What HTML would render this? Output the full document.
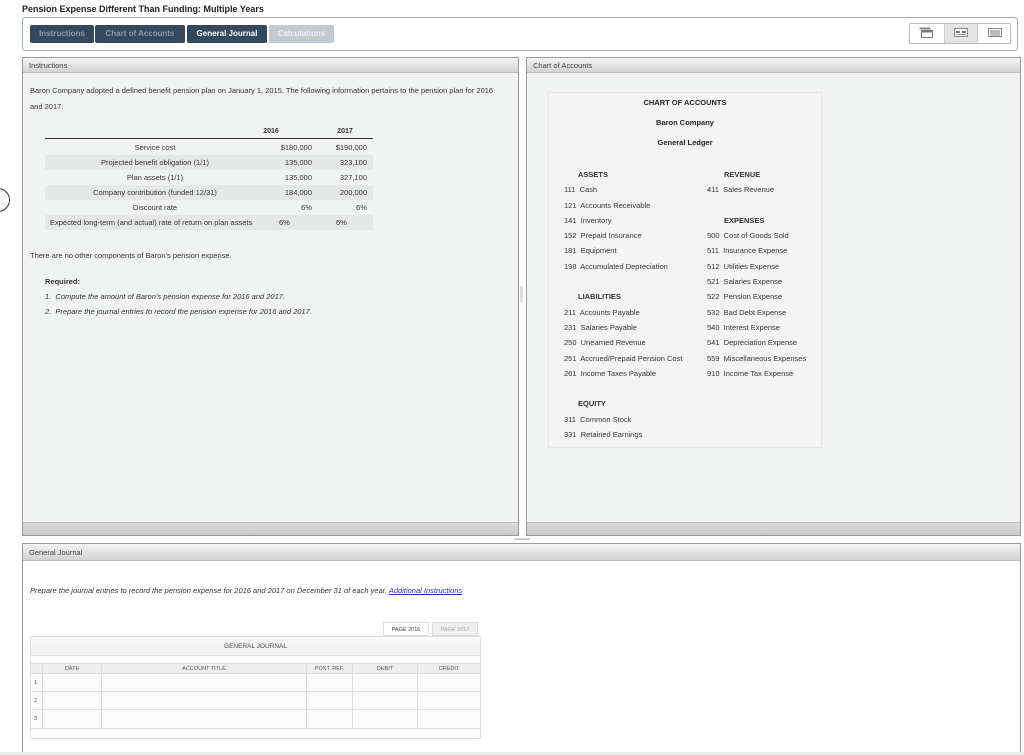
<!DOCTYPE html>
<html><head><meta charset="utf-8"><style>
*{margin:0;padding:0;box-sizing:border-box}
html,body{width:1024px;height:755px;overflow:hidden}
body{background:#fff;position:relative;font-family:"Liberation Sans",Arial,sans-serif;color:#333;font-size:7.5px}
.a{position:absolute;white-space:nowrap}
.panel{position:absolute;border:1px solid #9a9a9a;background:#f1f3f2}
.hdr{position:absolute;left:0;right:0;top:0;height:15px;background:linear-gradient(#f4f4f4,#d3d3d3);border-bottom:1px solid #bbb;font-size:7.5px;padding:3px 0 0 6px;color:#444}
.foot{position:absolute;left:0;right:0;bottom:0;height:13px;background:linear-gradient(#dcdcdc,#c8c8c8);border-top:1px solid #bbb}
.tab{position:absolute;top:25px;height:18px;font-size:8px;font-weight:bold;padding-top:4px;text-align:center;border-radius:2px}
.b{font-weight:bold}
.r{text-align:right}
.row{position:absolute;left:45px;width:328px;height:15px}
.row.g{background:#e6e8e7}
table{border-collapse:collapse}
</style></head><body>
<div class="a b" style="left:22px;top:4px;font-size:9px;color:#222">Pension Expense Different Than Funding: Multiple Years</div>
<div class="a" style="left:22px;top:17px;width:996px;height:34px;border:1px solid #aaa;border-radius:3px"></div>
<div class="tab" style="left:30px;width:64px;background:#34495e;color:#8b9aab">Instructions</div>
<div class="tab" style="left:95px;width:90px;background:#34495e;color:#8b9aab">Chart of Accounts</div>
<div class="tab" style="left:187px;width:80px;background:#34495e;color:#fff">General Journal</div>
<div class="tab" style="left:269px;width:65px;background:#c4c9ce;color:#eef">Calculations</div>
<div class="a" style="left:909px;top:23px;width:102px;height:21px;border:1px solid #bbb;border-radius:2px;background:#fff"></div>
<div class="a" style="left:944px;top:24px;width:34px;height:19px;background:#e4e4e4;border-left:1px solid #ccc;border-right:1px solid #ccc"></div>
<svg class="a" style="left:919px;top:27px" width="16" height="12"><rect x="0.5" y="0.5" width="11" height="2" fill="#888"/><rect x="2.5" y="3.5" width="11" height="7" fill="#fff" stroke="#777"/><rect x="2.5" y="3.5" width="11" height="2" fill="#777"/></svg>
<svg class="a" style="left:954px;top:28px" width="15" height="10"><rect x="0.5" y="0.5" width="13" height="8" fill="#fff" stroke="#888"/><rect x="2" y="3" width="4" height="2" fill="#777"/><rect x="8" y="3" width="4" height="2" fill="#777"/><rect x="2" y="6" width="10" height="1" fill="#999"/></svg>
<svg class="a" style="left:988px;top:28px" width="15" height="10"><rect x="0.5" y="0.5" width="13" height="8" fill="#fff" stroke="#888"/><rect x="2" y="2.5" width="10" height="1" fill="#777"/><rect x="2" y="4.5" width="10" height="1" fill="#777"/><rect x="2" y="6.5" width="10" height="1" fill="#777"/></svg>
<div class="a" style="left:-14px;top:188px;width:24px;height:24px;border:1px solid #333;border-radius:50%;background:#fff"></div>

<div class="panel" style="left:22px;top:57px;width:497px;height:479px">
<div class="hdr">Instructions</div><div class="foot"></div></div>
<div class="a" style="left:30px;top:86px">Baron Company adopted a defined benefit pension plan on January 1, 2015. The following information pertains to the pension plan for 2016</div>
<div class="a" style="left:30px;top:102px">and 2017:</div>
<div class="a b" style="left:255px;top:128px;width:32px;text-align:center;font-size:7px">2016</div>
<div class="a b" style="left:329px;top:128px;width:32px;text-align:center;font-size:7px">2017</div>
<div class="a" style="left:45px;top:138px;width:328px;border-top:1px solid #333"></div>
<div class="row" style="top:140px"></div>
<div class="row g" style="top:155px"></div>
<div class="row" style="top:170px"></div>
<div class="row g" style="top:185px"></div>
<div class="row" style="top:200px"></div>
<div class="row g" style="top:215px"></div>
<div class="a" style="left:45px;top:143px;width:220px;text-align:center">Service cost</div>
<div class="a" style="left:45px;top:158px;width:220px;text-align:center">Projected benefit obligation (1/1)</div>
<div class="a" style="left:45px;top:173px;width:220px;text-align:center">Plan assets (1/1)</div>
<div class="a" style="left:45px;top:188px;width:220px;text-align:center">Company contribution (funded 12/31)</div>
<div class="a" style="left:45px;top:203px;width:220px;text-align:center">Discount rate</div>
<div class="a" style="left:50px;top:218px">Expected long-term (and actual) rate of return on plan assets</div>
<div class="a r" style="left:250px;top:143px;width:62px">$180,000</div>
<div class="a r" style="left:305px;top:143px;width:62px">$190,000</div>
<div class="a r" style="left:250px;top:158px;width:62px">135,000</div>
<div class="a r" style="left:305px;top:158px;width:62px">323,100</div>
<div class="a r" style="left:250px;top:173px;width:62px">135,000</div>
<div class="a r" style="left:305px;top:173px;width:62px">327,100</div>
<div class="a r" style="left:250px;top:188px;width:62px">184,000</div>
<div class="a r" style="left:305px;top:188px;width:62px">200,000</div>
<div class="a r" style="left:250px;top:203px;width:62px">6%</div>
<div class="a r" style="left:305px;top:203px;width:62px">6%</div>
<div class="a" style="left:279px;top:218px">6%</div>
<div class="a" style="left:336px;top:218px">6%</div>
<div class="a" style="left:30px;top:251px">There are no other components of Baron’s pension expense.</div>
<div class="a b" style="left:45px;top:277px">Required:</div>
<div class="a" style="left:45px;top:292px;font-style:italic">1.&nbsp; Compute the amount of Baron’s pension expense for 2016 and 2017.</div>
<div class="a" style="left:45px;top:307px;font-style:italic">2.&nbsp; Prepare the journal entries to record the pension expense for 2016 and 2017.</div>
<div class="a" style="left:520px;top:286px;width:3px;height:16px;background:#ddd"></div>

<div class="panel" style="left:526px;top:57px;width:495px;height:479px">
<div class="hdr">Chart of Accounts</div><div class="foot"></div></div>
<div class="a" style="left:548px;top:92px;width:274px;height:356px;background:#f3f4f3;border:1px solid #e6e8e7"></div>
<div class="a b" style="left:548px;top:98px;width:274px;text-align:center;color:#222">CHART OF ACCOUNTS</div>
<div class="a b" style="left:548px;top:118px;width:274px;text-align:center;color:#222">Baron Company</div>
<div class="a b" style="left:548px;top:138px;width:274px;text-align:center;color:#222">General Ledger</div>
<div class="a" style="left:564px;top:167px;line-height:15.3px">
<div class="b" style="padding-left:14px">ASSETS</div>
<div>111&nbsp; Cash</div><div>121&nbsp; Accounts Receivable</div><div>141&nbsp; Inventory</div><div>152&nbsp; Prepaid Insurance</div><div>181&nbsp; Equipment</div><div>198&nbsp; Accumulated Depreciation</div><div>&nbsp;</div>
<div class="b" style="padding-left:14px">LIABILITIES</div>
<div>211&nbsp; Accounts Payable</div><div>231&nbsp; Salaries Payable</div><div>250&nbsp; Unearned Revenue</div><div>251&nbsp; Accrued/Prepaid Pension Cost</div><div>261&nbsp; Income Taxes Payable</div><div>&nbsp;</div>
<div class="b" style="padding-left:14px">EQUITY</div>
<div>311&nbsp; Common Stock</div><div>331&nbsp; Retained Earnings</div></div>
<div class="a" style="left:707px;top:167px;line-height:15.3px">
<div class="b" style="padding-left:17px">REVENUE</div>
<div>411&nbsp; Sales Revenue</div><div>&nbsp;</div>
<div class="b" style="padding-left:17px">EXPENSES</div>
<div>500&nbsp; Cost of Goods Sold</div><div>511&nbsp; Insurance Expense</div><div>512&nbsp; Utilities Expense</div><div>521&nbsp; Salaries Expense</div><div>522&nbsp; Pension Expense</div><div>532&nbsp; Bad Debt Expense</div><div>540&nbsp; Interest Expense</div><div>541&nbsp; Depreciation Expense</div><div>559&nbsp; Miscellaneous Expenses</div><div>910&nbsp; Income Tax Expense</div></div>
<div class="a" style="left:514px;top:538px;width:16px;height:2px;border-top:1px solid #ccc;border-bottom:1px solid #ccc"></div>

<div class="panel" style="left:22px;top:543px;width:999px;height:220px;background:#fff">
<div class="hdr" style="height:17px;padding-top:4px">General Journal</div></div>
<div class="a" style="left:30px;top:586px;font-style:italic">Prepare the journal entries to record the pension expense for 2016 and 2017 on December 31 of each year. <span style="color:#2233cc;text-decoration:underline">Additional Instructions</span></div>
<div class="a" style="left:383px;top:622px;width:46px;height:14px;border:1px solid #ddd;background:#fff;font-size:5.5px;text-align:center;padding-top:4px;color:#444">PAGE 2016</div>
<div class="a" style="left:432px;top:622px;width:46px;height:14px;border:1px solid #ddd;background:#eee;font-size:5.5px;text-align:center;padding-top:4px;color:#aaa">PAGE 2017</div>
<div class="a" style="left:30px;top:636px;width:451px;height:103px;border:1px solid #ddd;border-radius:2px;background:#fff"></div>
<div class="a" style="left:31px;top:637px;width:449px;height:19px;background:linear-gradient(#fafafa,#eee);border-bottom:1px solid #ddd;text-align:center;padding-top:6px;font-size:6.5px;color:#444">GENERAL JOURNAL</div>
<table class="a" style="left:30px;top:663px;width:451px;font-size:5.5px;color:#555">
<tr style="height:10px;background:#eee"><td style="width:12px;border:1px solid #ddd"></td><td style="width:59px;border:1px solid #ddd;text-align:center">DATE</td><td style="width:205px;border:1px solid #ddd;text-align:center">ACCOUNT TITLE</td><td style="width:46px;border:1px solid #ddd;text-align:center">POST. REF.</td><td style="width:65px;border:1px solid #ddd;text-align:center">DEBIT</td><td style="border:1px solid #ddd;text-align:center">CREDIT</td></tr>
<tr style="height:18px;background:#fbfbfb"><td style="border:1px solid #ddd;padding-left:3px">1</td><td style="border:1px solid #ddd"></td><td style="border:1px solid #ddd"></td><td style="border:1px solid #ddd"></td><td style="border:1px solid #ddd"></td><td style="border:1px solid #ddd"></td></tr>
<tr style="height:18px;background:#fbfbfb"><td style="border:1px solid #ddd;padding-left:3px">2</td><td style="border:1px solid #ddd"></td><td style="border:1px solid #ddd"></td><td style="border:1px solid #ddd"></td><td style="border:1px solid #ddd"></td><td style="border:1px solid #ddd"></td></tr>
<tr style="height:19px;background:#fbfbfb"><td style="border:1px solid #ddd;padding-left:3px">3</td><td style="border:1px solid #ddd"></td><td style="border:1px solid #ddd"></td><td style="border:1px solid #ddd"></td><td style="border:1px solid #ddd"></td><td style="border:1px solid #ddd"></td></tr>
</table>
<div class="a" style="left:0;top:752px;width:1024px;height:3px;background:#eee"></div>
</body></html>
